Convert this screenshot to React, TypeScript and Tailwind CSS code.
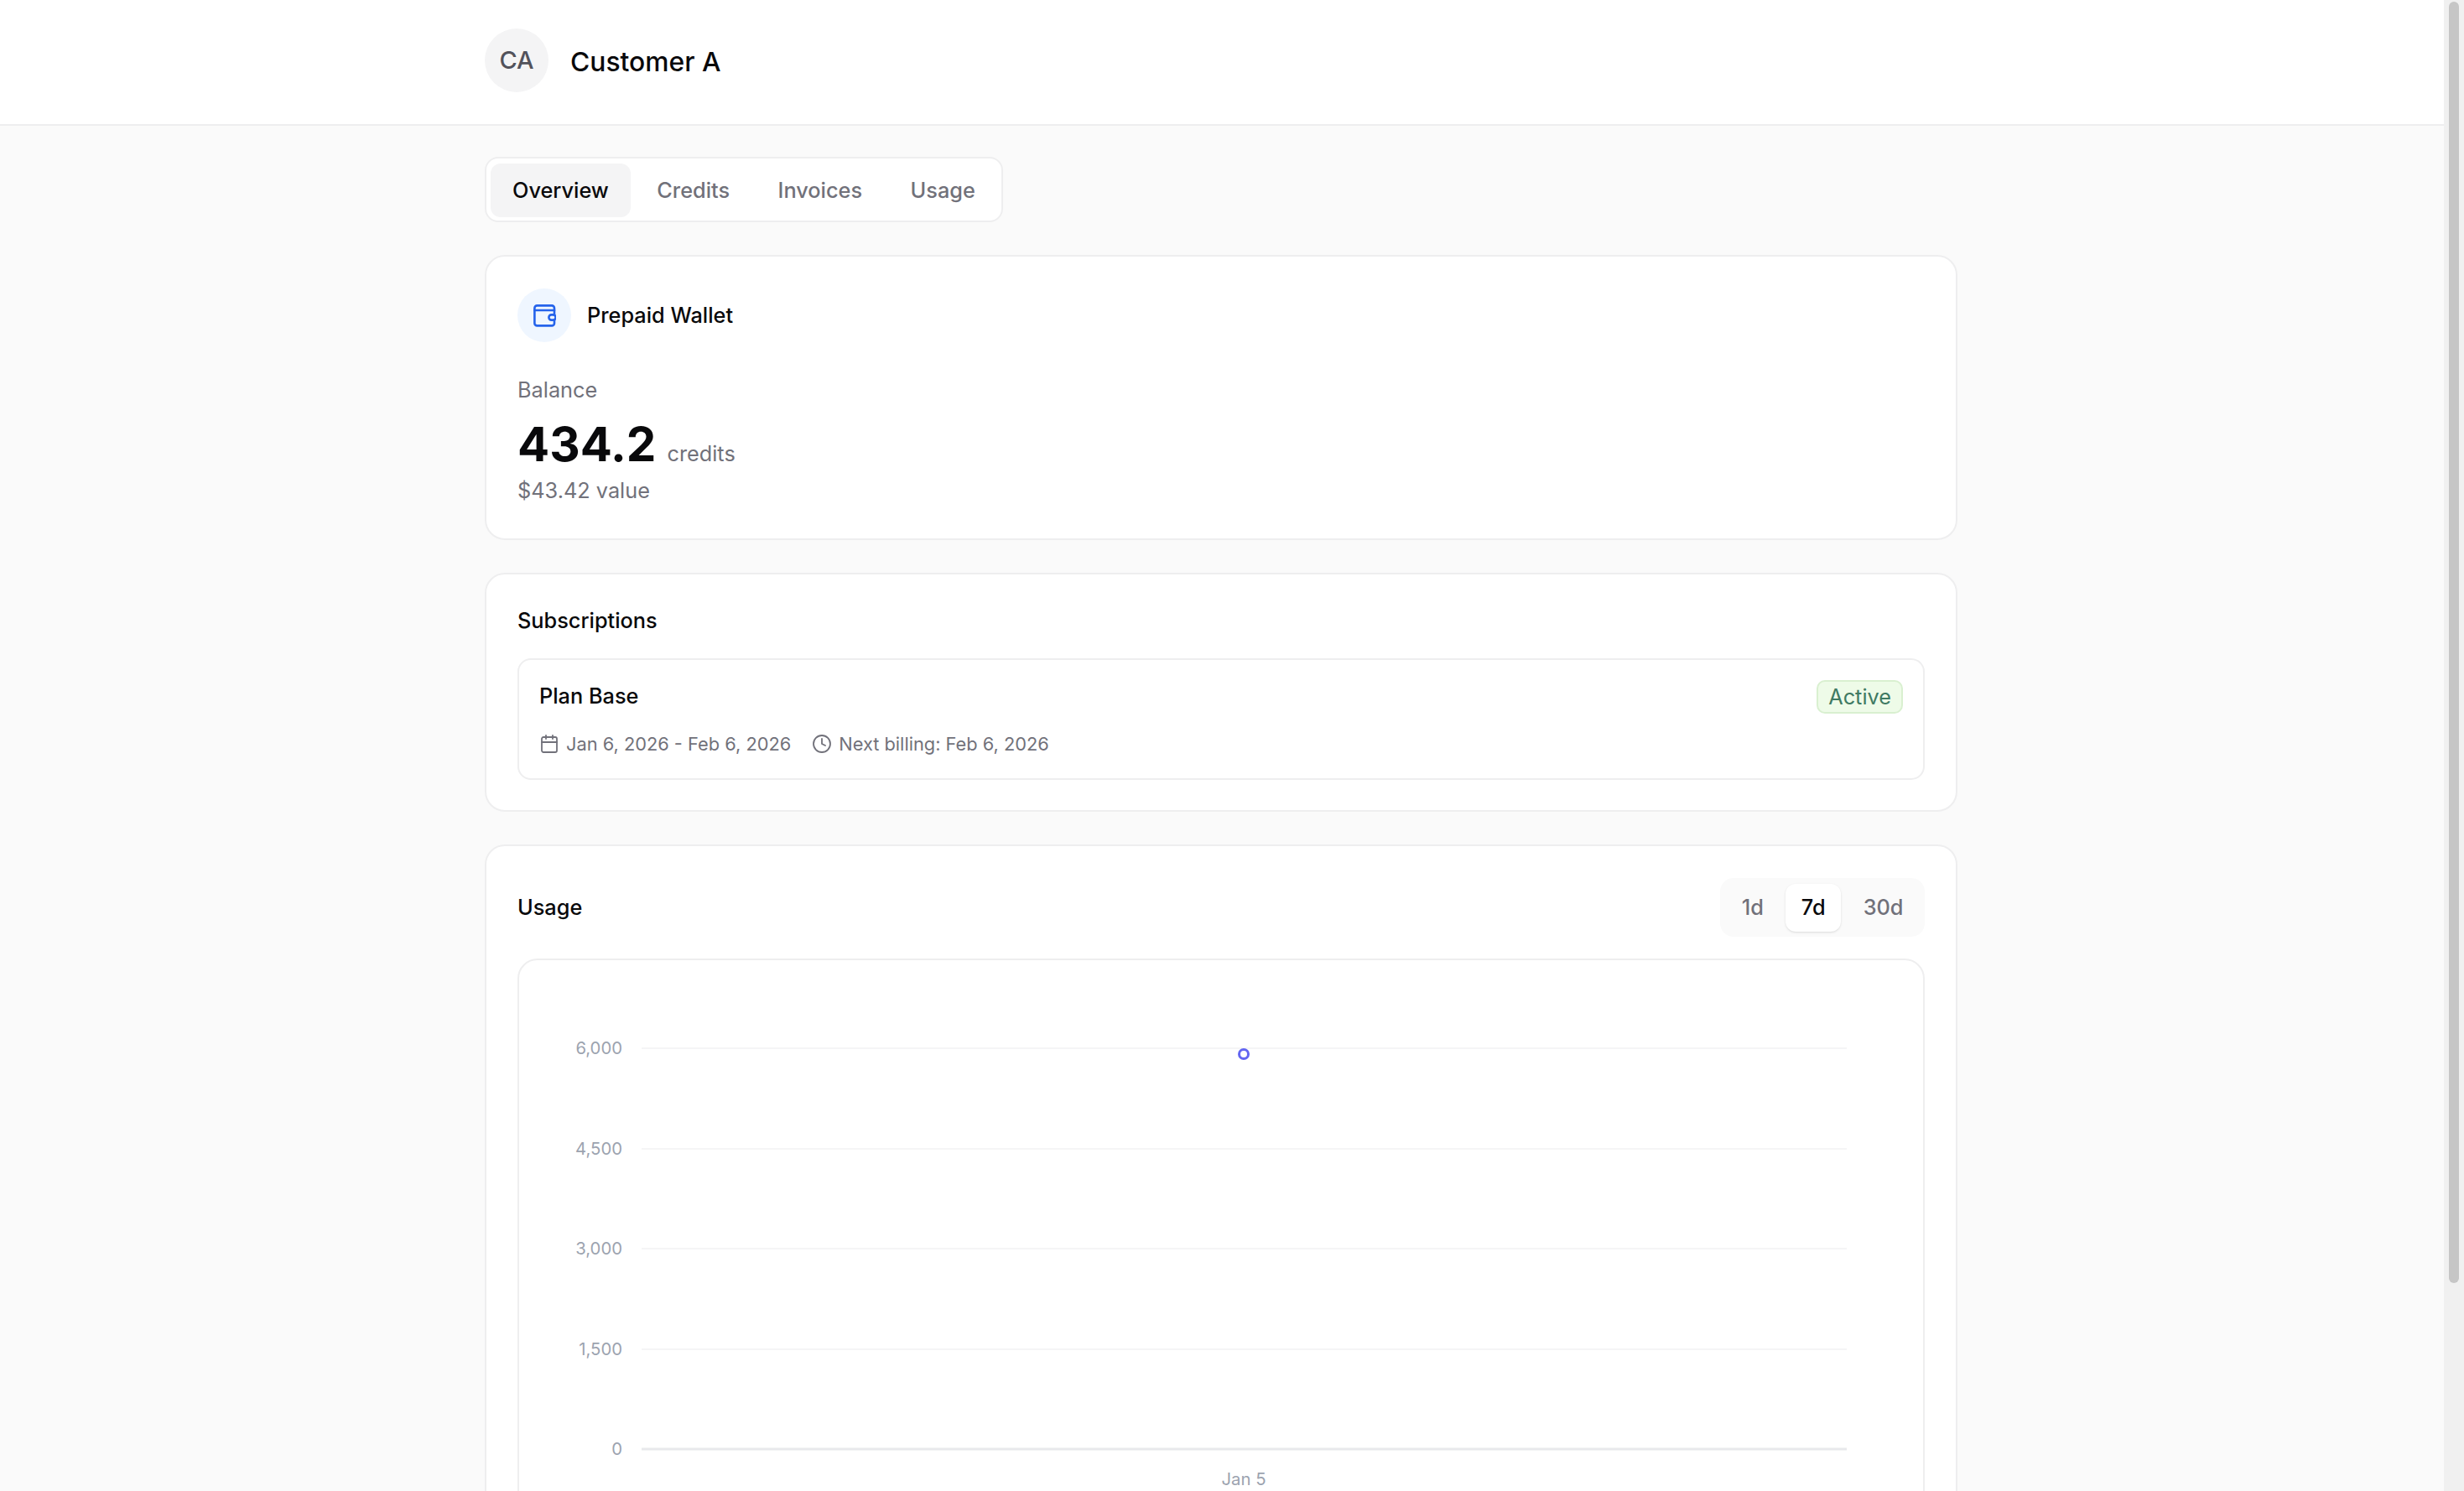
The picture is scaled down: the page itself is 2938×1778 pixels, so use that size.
import { Calendar, Clock } from 'lucide-react';

const gridLines = [
  { y: 105, label: '6,000' },
  { y: 225, label: '4,500' },
  { y: 344, label: '3,000' },
  { y: 464, label: '1,500' },
  { y: 583, label: '0' },
];

const WalletIcon = () => (
  <svg width="28" height="28" viewBox="-1 -1 28 28" fill="none" stroke="#2563eb" strokeWidth="2.6" strokeLinecap="round" strokeLinejoin="round">
    <rect x="1.4" y="1.4" width="23.6" height="24" rx="3" />
    <path d="M1.4 7H25" />
    <rect x="18.4" y="12.4" width="8.2" height="6.2" rx="3" fill="#eff6ff" />
  </svg>
);

const UsageChart = () => (
  <svg width="1674" height="838" viewBox="0 0 1674 838" className="block">
    {gridLines.map((line, i) => (
      <g key={line.label}>
        <line x1="146" x2="1583" y1={line.y} y2={line.y} stroke={i === 4 ? '#e8e9ec' : '#f5f5f6'} strokeWidth={i === 4 ? 3 : 2} />
        <text x="123" y={line.y + 7} textAnchor="end" fontSize="20.3" fill="#9ca3af">
          {line.label}
        </text>
      </g>
    ))}
    <circle cx="864" cy="112" r="5.5" fill="#fff" stroke="#6366f1" strokeWidth="3" />
    <text x="864" y="626" textAnchor="middle" fontSize="20.3" fill="#9ca3af">
      Jan 5
    </text>
  </svg>
);

export default function App() {
  return (
    <div className="h-screen flex bg-[#fafafa] font-['Inter',sans-serif] text-[#09090b]">
      <div className="flex-1 min-w-0 overflow-hidden">
        <header className="h-[150px] bg-white border-b-2 border-[#eeeeef] pr-[2px]">
          <div className="w-[1756px] h-full mx-auto flex items-center gap-[26px]">
            <div className="w-[76px] h-[76px] mb-[4px] rounded-full bg-[#f4f4f5] flex items-center justify-center text-[29px] font-medium text-[#52525b]">
              CA
            </div>
            <h1 className="text-[31.8px] font-medium">Customer A</h1>
          </div>
        </header>

        <div className="pr-[2px]">
          <main className="w-[1756px] mx-auto pt-[37px] pb-[40px] flex flex-col gap-[39px]">
            {/* Tabs */}
            <nav className="self-start h-[78px] px-[5px] pt-[6px] pb-[4px] bg-white border-2 border-[#eeeeef] rounded-2xl flex gap-[5.5px] text-[25.3px] font-medium text-[#71717a]">
              <button className="h-[64px] px-[26px] rounded-xl bg-[#f4f4f5] text-[#09090b]">Overview</button>
              <button className="h-[64px] px-[26px] rounded-xl">Credits</button>
              <button className="h-[64px] px-[26px] rounded-xl">Invoices</button>
              <button className="h-[64px] px-[26px] rounded-xl">Usage</button>
            </nav>

            {/* Wallet */}
            <section className="bg-white border-2 border-[#eeeeef] rounded-3xl px-[37px] py-[38px]">
              <div className="flex items-center gap-[19px]">
                <div className="w-16 h-16 rounded-full bg-[#eff6ff] flex items-center justify-center">
                  <WalletIcon />
                </div>
                <h2 className="text-[25.3px] font-medium">Prepaid Wallet</h2>
              </div>
              <p className="mt-[37px] text-[25.3px] leading-10 text-[#71717a]">Balance</p>
              <div className="flex items-baseline gap-[13px] h-20 pt-[5px]">
                <span className="text-[56.5px] leading-20 font-bold">434.2</span>
                <span className="text-[25.3px] text-[#71717a]">credits</span>
              </div>
              <p className="text-[25.3px] leading-[39px] text-[#71717a]">$43.42 value</p>
            </section>

            {/* Subscriptions */}
            <section className="bg-white border-2 border-[#eeeeef] rounded-3xl px-[37px] pt-[36px] pb-[36px]">
              <h2 className="text-[25.3px] leading-[38px] font-medium mb-[26px]">Subscriptions</h2>
              <div className="border-2 border-[#eeeeef] rounded-2xl px-[24px] pt-[24px] pb-[25px]">
                <div className="flex items-center justify-between">
                  <span className="mb-[2px] text-[25.3px] font-medium">Plan Base</span>
                  <span className="h-10 px-3 flex items-center rounded-[10px] border-2 border-[#d9f0d0] bg-[#eefbe8] text-[25.3px] text-[#3f7a63]">
                    Active
                  </span>
                </div>
                <div className="mt-5 h-8 flex items-center gap-[25px] text-[21.8px] text-[#71717a]">
                  <span className="flex items-center gap-[8px]">
                    <Calendar size={24} strokeWidth={1.8} />
                    Jan 6, 2026 - Feb 6, 2026
                  </span>
                  <span className="flex items-center gap-[8px]">
                    <Clock size={24} strokeWidth={1.8} />
                    Next billing: Feb 6, 2026
                  </span>
                </div>
              </div>
            </section>

            {/* Usage */}
            <section className="bg-white border-2 border-[#eeeeef] rounded-3xl px-[37px] pt-[38px] pb-[38px]">
              <div className="flex items-center justify-between mb-[26px]">
                <h2 className="text-[25.3px] font-medium">Usage</h2>
                <div className="px-[7px] pt-[7px] pb-[6px] rounded-2xl bg-[#fafafa] flex gap-2 text-[25.3px] font-medium text-[#71717a]">
                  <button className="h-[57px] pb-[2px] px-[18.5px] rounded-xl">1d</button>
                  <button className="h-[57px] pb-[2px] px-[18.5px] rounded-xl bg-white text-[#09090b] shadow-sm">7d</button>
                  <button className="h-[57px] pb-[2px] px-[18.5px] rounded-xl">30d</button>
                </div>
              </div>
              <div className="border-2 border-[#eeeeef] rounded-3xl">
                <UsageChart />
              </div>
            </section>
          </main>
        </div>
      </div>

      {/* Scrollbar */}
      <div className="w-[24px] shrink-0 bg-[#f0f0f0] px-[6px] pt-[2px]">
        <div className="h-[1528px] rounded-full bg-[#c6c6c6]" />
      </div>
    </div>
  );
}
